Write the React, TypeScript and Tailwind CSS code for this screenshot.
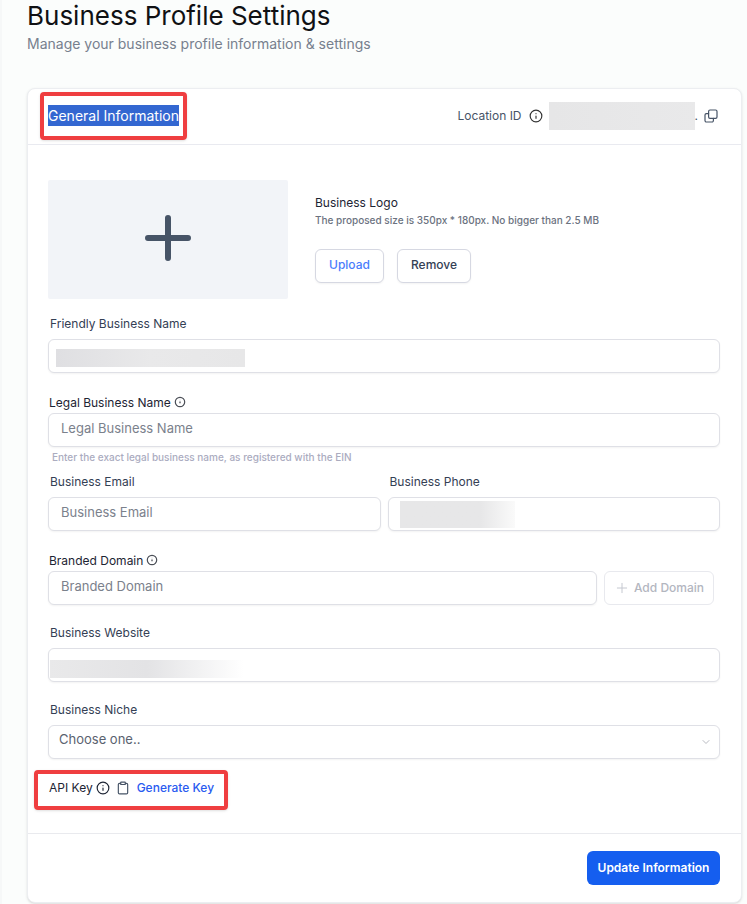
import { useState, type ReactNode } from "react";
import { Clipboard, ChevronDown, Info, Plus } from "lucide-react";

const inputClass =
  "block h-[34px] w-full rounded-md border border-[#dfe0e6] bg-white px-3 pb-1 text-[13px] text-[#5a6270] shadow-xs placeholder:text-[#7b818c] focus:border-blue-500 focus:outline-none";

const outlineButton =
  "h-[34px] rounded-md border border-[#d6d8e2] bg-white pb-0.5 text-[12px] font-medium shadow-xs";

function CopyIcon() {
  return (
    <svg viewBox="0 0 14 14" className="size-3.5" fill="none" stroke="#475467" strokeWidth="1.2" strokeLinejoin="round">
      <rect x="4.6" y="1" width="8.4" height="8.4" rx="1.4" />
      <path d="M4.6 4.6H2.4A1.4 1.4 0 0 0 1 6v5.6A1.4 1.4 0 0 0 2.4 13H8a1.4 1.4 0 0 0 1.4-1.4V9.4" strokeLinecap="round" />
    </svg>
  );
}

function HintIcon() {
  return (
    <svg viewBox="0 0 12 12" className="mb-0.5 size-3" fill="none" stroke="#4b4f57">
      <circle cx="6" cy="6" r="4.7" strokeWidth="1.2" />
      <path d="M6 5.6v1.6" strokeWidth="1.3" />
      <path d="M6 3.6v.8" strokeWidth="1" opacity=".35" />
    </svg>
  );
}

type FieldProps = {
  id: string;
  label: string;
  className?: string;
  children: ReactNode;
};

function Field({ id, label, className = "", children }: FieldProps) {
  return (
    <div className={className}>
      <label htmlFor={id} className="mb-[5px] block pl-0.5 text-[12px] leading-5 text-[#344054]">
        {label}
      </label>
      <div className="relative">{children}</div>
    </div>
  );
}

function HintLabel({ id, label }: { id: string; label: string }) {
  return (
    <label htmlFor={id} className="flex items-center gap-[3px] pl-px text-[12px] leading-5 text-[#1d2433]">
      {label}
      <HintIcon />
    </label>
  );
}

export default function App() {
  const [niche, setNiche] = useState("");

  return (
    <main className="min-h-screen border-l-2 border-[#f6f8f8] bg-[#fbfdfc] pr-[5px] pl-[25px] font-['Inter',sans-serif]">
      <h1 className="text-[26px] leading-8 text-[#101114]">Business Profile Settings</h1>
      <p className="mt-0.5 text-[14px] leading-5 text-[#77808e]">
        Manage your business profile information &amp; settings
      </p>

      <form
        onSubmit={(e) => e.preventDefault()}
        className="mt-[34px] rounded-lg border border-[#eceef1] bg-white shadow-sm"
      >
        <div className="flex h-14 items-center justify-between border-b border-[#e9eaf0] pr-[23px] pb-0.5 pl-5">
          <h2 className="relative text-[14px] leading-5 text-white">
            <span className="box-decoration-clone bg-[#3367d1] py-0.5">General Information</span>
            <span className="pointer-events-none absolute -inset-x-2 -inset-y-3.5 rounded-sm border-4 border-[#ef3e40] shadow-sm" />
          </h2>
          <div className="flex items-center text-[12px] text-[#475467]">
            <span>Location ID</span>
            <Info className="mr-1.5 ml-[7px] size-3.5 text-[#333]" />
            <span className="h-7 w-[146px] bg-linear-to-r from-[#e6e6e7] to-[#e9e9ea]" />
            <span>.</span>
            <button type="button" aria-label="Copy location ID" className="ml-1.5">
              <CopyIcon />
            </button>
          </div>
        </div>

        <div className="py-[35px] pr-[21px] pl-5">
          <div className="flex gap-[27px]">
            <button
              type="button"
              aria-label="Add logo"
              className="flex h-[119px] w-60 items-center justify-center rounded-xs bg-[#f2f4f8] pb-1"
            >
              <svg viewBox="0 0 46 46" className="size-[46px]" stroke="#475467" strokeWidth="6" strokeLinecap="round">
                <path d="M23 3v40M3 23h40" />
              </svg>
            </button>
            <div className="pt-3.5">
              <p className="text-[12px] leading-[18px] text-[#1d2433]">Business Logo</p>
              <p className="text-[10px] leading-4 font-medium text-[#6b7280]">
                The proposed size is 350px * 180px. No bigger than 2.5 MB
              </p>
              <div className="mt-[21px] flex gap-[13px]">
                <button type="button" className={`${outlineButton} w-[69px] text-[#4a7dfc]`}>
                  Upload
                </button>
                <button type="button" className={`${outlineButton} w-[74px] text-[#344054]`}>
                  Remove
                </button>
              </div>
            </div>
          </div>

          <Field id="friendly" label="Friendly Business Name" className="mt-[15px]">
            <input id="friendly" className={inputClass} />
            <span className="absolute top-2.5 left-2 h-[18px] w-[189px] bg-linear-to-r from-[#dfdfe2] via-[#e9e9ea] to-[#e7e7e8]" />
          </Field>

          <div className="mt-5">
            <HintLabel id="legal" label="Legal Business Name" />
            <input id="legal" placeholder="Legal Business Name" className={inputClass} />
            <p className="mt-0.5 pl-1 text-[10px] leading-4 font-medium text-[#abacbf]">
              Enter the exact legal business name, as registered with the EIN
            </p>
          </div>

          <div className="mt-[7px] grid grid-cols-2 gap-[7px]">
            <Field id="email" label="Business Email">
              <input id="email" type="email" placeholder="Business Email" className={inputClass} />
            </Field>
            <Field id="phone" label="Business Phone">
              <input id="phone" type="tel" className={inputClass} />
              <span className="absolute top-1 left-3 h-[27px] w-[115px] bg-linear-to-r from-[#e7e7e8] from-70% to-[#fafafa]" />
            </Field>
          </div>

          <div className="mt-5">
            <HintLabel id="domain" label="Branded Domain" />
            <div className="flex gap-[7px] pr-1.5">
              <input id="domain" placeholder="Branded Domain" className={inputClass} />
              <button
                type="button"
                disabled
                className="flex h-[34px] w-[110px] shrink-0 items-center justify-center gap-1 rounded-md border border-[#e8e9ee] text-[12px] font-medium text-[#b3b6bf]"
              >
                <Plus className="size-4 text-[#c5c8d0]" strokeWidth={1.5} />
                Add Domain
              </button>
            </div>
          </div>

          <Field id="website" label="Business Website" className="mt-[18px]">
            <input id="website" className={inputClass} />
            <span className="absolute top-3 left-0.5 h-[18px] w-[194px] bg-linear-to-r from-[#e9e9ea] via-[#e3e3e5] via-50% to-white" />
          </Field>

          <Field id="niche" label="Business Niche" className="mt-[18px]">
            <select
              id="niche"
              value={niche}
              onChange={(e) => setNiche(e.target.value)}
              className={`${inputClass} appearance-none pl-2.5`}
            >
              <option value="">Choose one..</option>
            </select>
            <ChevronDown
              className="pointer-events-none absolute top-[11px] right-2 size-3 text-[#b9bbc2]"
              strokeWidth={2}
            />
          </Field>

          <div className="relative mt-[19px] flex h-5 w-max items-center text-[12px] leading-5 text-[#1d2433]">
            <span className="pl-px">API Key</span>
            <Info className="ml-[3px] size-3.5" />
            <Clipboard className="mr-[7px] ml-1.5 size-3.5 text-[#475467]" />
            <button type="button" className="font-medium text-[#2a5bf0]">
              Generate Key
            </button>
            <span className="pointer-events-none absolute -top-2 -right-3.5 -bottom-3 -left-3.5 rounded-sm border-4 border-[#ef3e40] shadow-sm" />
          </div>
        </div>

        <div className="flex justify-end border-t border-[#e9eaee] py-[17px] pr-[21px]">
          <button type="submit" className="h-[34px] w-[133px] rounded-md bg-[#155eef] text-[12px] font-semibold text-white">
            Update Information
          </button>
        </div>
      </form>
    </main>
  );
}
